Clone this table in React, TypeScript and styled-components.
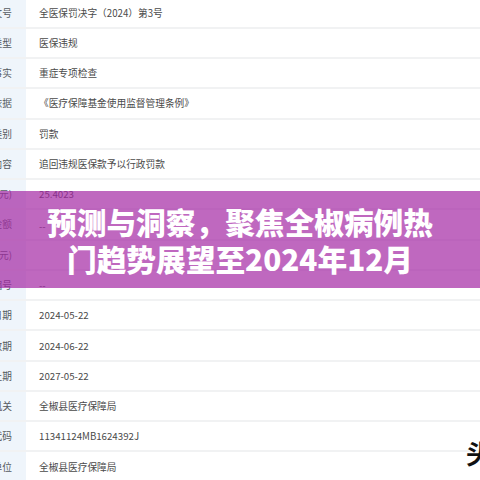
import React from "react";
import styled, { createGlobalStyle } from "styled-components";

const Global = createGlobalStyle`
  html, body { margin: 0; padding: 0; width: 480px; height: 480px; overflow: hidden; background: #ffffff; }
  #root { width: 480px; height: 480px; }
`;

const Page = styled.div`
  position: relative;
  width: 480px;
  height: 480px;
  overflow: hidden;
  font-family: "Noto Sans CJK SC", "Noto Sans", sans-serif;
`;

const Table = styled.div`
  display: flex;
  flex-direction: column;
  margin-top: -1.5px;
`;

const Row = styled.div`
  display: grid;
  grid-template-columns: 26px 1fr;
  height: 30.27px;
  box-sizing: border-box;
  border-bottom: 2px solid #f1f2f3;
`;

const Label = styled.div`
  display: flex;
  justify-content: flex-end;
  align-items: center;
  overflow: hidden;
  padding-right: 14px;
  background: #eff5fb;
  color: #555a60;
  font-size: 9.7px;
  white-space: nowrap;
  span { flex-shrink: 0; }
`;

const Value = styled.div<{ $low?: boolean }>`
  display: flex;
  align-items: ${(p) => (p.$low ? "flex-end" : "center")};
  padding-left: 13px;
  padding-bottom: ${(p) => (p.$low ? "6px" : "0")};
  color: #4a4a4a;
  font-size: 9.7px;
  white-space: nowrap;
`;

const Banner = styled.div`
  position: absolute;
  left: 0;
  right: 0;
  top: 191px;
  height: 97px;
  background: rgba(164, 40, 164, 0.7);
  display: flex;
  flex-direction: column;
  align-items: center;
  justify-content: center;
`;

const Title = styled.div`
  color: #ffffff;
  font-family: "Noto Sans CJK SC", sans-serif;
  font-weight: 900;
  font-size: 29.7px;
  line-height: 37px;
  text-align: center;
  white-space: nowrap;
`;

const Mark = styled.div`
  position: absolute;
  left: 466px;
  top: 438px;
  color: #111111;
  font-family: "Noto Sans CJK SC", sans-serif;
  font-weight: 700;
  font-size: 26px;
  line-height: 30px;
  text-shadow: 0 0 2px #ffffff, 0 0 3px #ffffff;
`;

const rows: { label: string; value: string; low?: boolean }[] = [
  { label: "行政处罚决定书文号", value: "全医保罚决字（2024）第3号" },
  { label: "违法行为类型", value: "医保违规" },
  { label: "违法事实", value: "重症专项检查" },
  { label: "处罚依据", value: "《医疗保障基金使用监督管理条例》" },
  { label: "处罚类别", value: "罚款" },
  { label: "处罚内容", value: "追回违规医保款予以行政罚款" },
  { label: "罚款金额(万元)", value: "25.4023" },
  { label: "没收违法所得、没收非法财物的金额", value: "--", low: true },
  { label: "没收违法所得、没收非法财物的金额(万元)", value: "" },
  { label: "暂扣或吊销证照名称及编号", value: "--" },
  { label: "处罚决定日期", value: "2024-05-22" },
  { label: "处罚有效期", value: "2024-06-22" },
  { label: "公示截止期", value: "2027-05-22" },
  { label: "处罚机关", value: "全椒县医疗保障局" },
  { label: "处罚机关统一社会信用代码", value: "11341124MB1624392J" },
  { label: "数据来源单位", value: "全椒县医疗保障局" },
];

export default function App() {
  return (
    <Page>
      <Global />
      <Table>
        {rows.map((r, i) => (
          <Row key={i}>
            <Label>
              <span>{r.label}</span>
            </Label>
            <Value $low={r.low}>{r.value}</Value>
          </Row>
        ))}
      </Table>
      <Banner>
        <Title>预测与洞察，聚焦全椒病例热</Title>
        <Title>门趋势展望至2024年12月</Title>
      </Banner>
      <Mark>头</Mark>
    </Page>
  );
}
